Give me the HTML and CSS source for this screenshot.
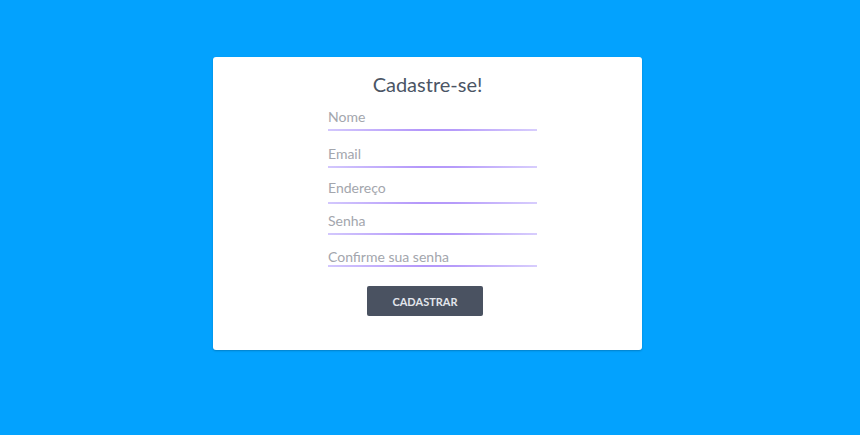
FILE: index.html
```html
<!DOCTYPE html>
<html lang="pt-BR">
<head>
<meta charset="utf-8">
<title>Cadastre-se!</title>
<link rel="stylesheet" href="styles.css">
</head>
<body>
<main class="page">
  <form class="card">
    <h1 class="title">Cadastre-se!</h1>
    <div class="fields">
      <input class="field f1" type="text" placeholder="Nome">
      <input class="field f2" type="email" placeholder="Email">
      <input class="field f3" type="text" placeholder="Endereço">
      <input class="field f4" type="password" placeholder="Senha">
      <input class="field f5" type="password" placeholder="Confirme sua senha">
    </div>
    <button class="btn" type="button">CADASTRAR</button>
  </form>
</main>
</body>
</html>
```

FILE: styles.css
```css
html, body {
  margin: 0;
  padding: 0;
  height: 100%;
}
body {
  background: #03a2fe;
  font-family: Lato, "Open Sans", sans-serif;
}
.page {
  display: flex;
  justify-content: center;
  padding-top: 57px;
  padding-right: 5px;
}
.card {
  width: 429px;
  box-sizing: border-box;
  background: #ffffff;
  border-radius: 3px;
  box-shadow: 0 1px 2px rgba(0, 0, 0, 0.22);
  padding: 15px 0 34px;
  display: flex;
  flex-direction: column;
  align-items: center;
}
.title {
  margin: 0;
  font-size: 20px;
  line-height: 24px;
  font-weight: 400;
  color: #4b5565;
}
.fields {
  width: 209px;
  margin-left: 10px;
  display: flex;
  flex-direction: column;
}
.field {
  display: block;
  width: 209px;
  box-sizing: content-box;
  height: 17px;
  line-height: 17px;
  margin: 0;
  padding: 0;
  border: 0;
  border-bottom: 2px solid transparent;
  border-image: linear-gradient(90deg, #d3c8fd 0%, #b497fa 45%, #b69bfa 60%, #d8cefd 100%) 1;
  background: transparent;
  font-family: Lato, "Open Sans", sans-serif;
  font-size: 14px;
  color: #4a5568;
  outline: none;
}
.field::placeholder {
  color: #a3a6ad;
}
.f1 { margin-top: 12px; padding-bottom: 4px; }
.f2 { margin-top: 14px; padding-bottom: 4px; }
.f3 { margin-top: 11px; padding-bottom: 6px; }
.f4 { margin-top: 8px; padding-bottom: 4px; }
.f5 { margin-top: 13px; padding-bottom: 0; }
.btn {
  margin-top: 19px;
  margin-left: -5px;
  width: 116px;
  height: 30px;
  border: 0;
  border-radius: 2px;
  background: #4a5261;
  color: #e2e6ec;
  font-family: Lato, "Open Sans", sans-serif;
  font-size: 11px;
  font-weight: 700;
  padding: 0;
  cursor: pointer;
}
```
